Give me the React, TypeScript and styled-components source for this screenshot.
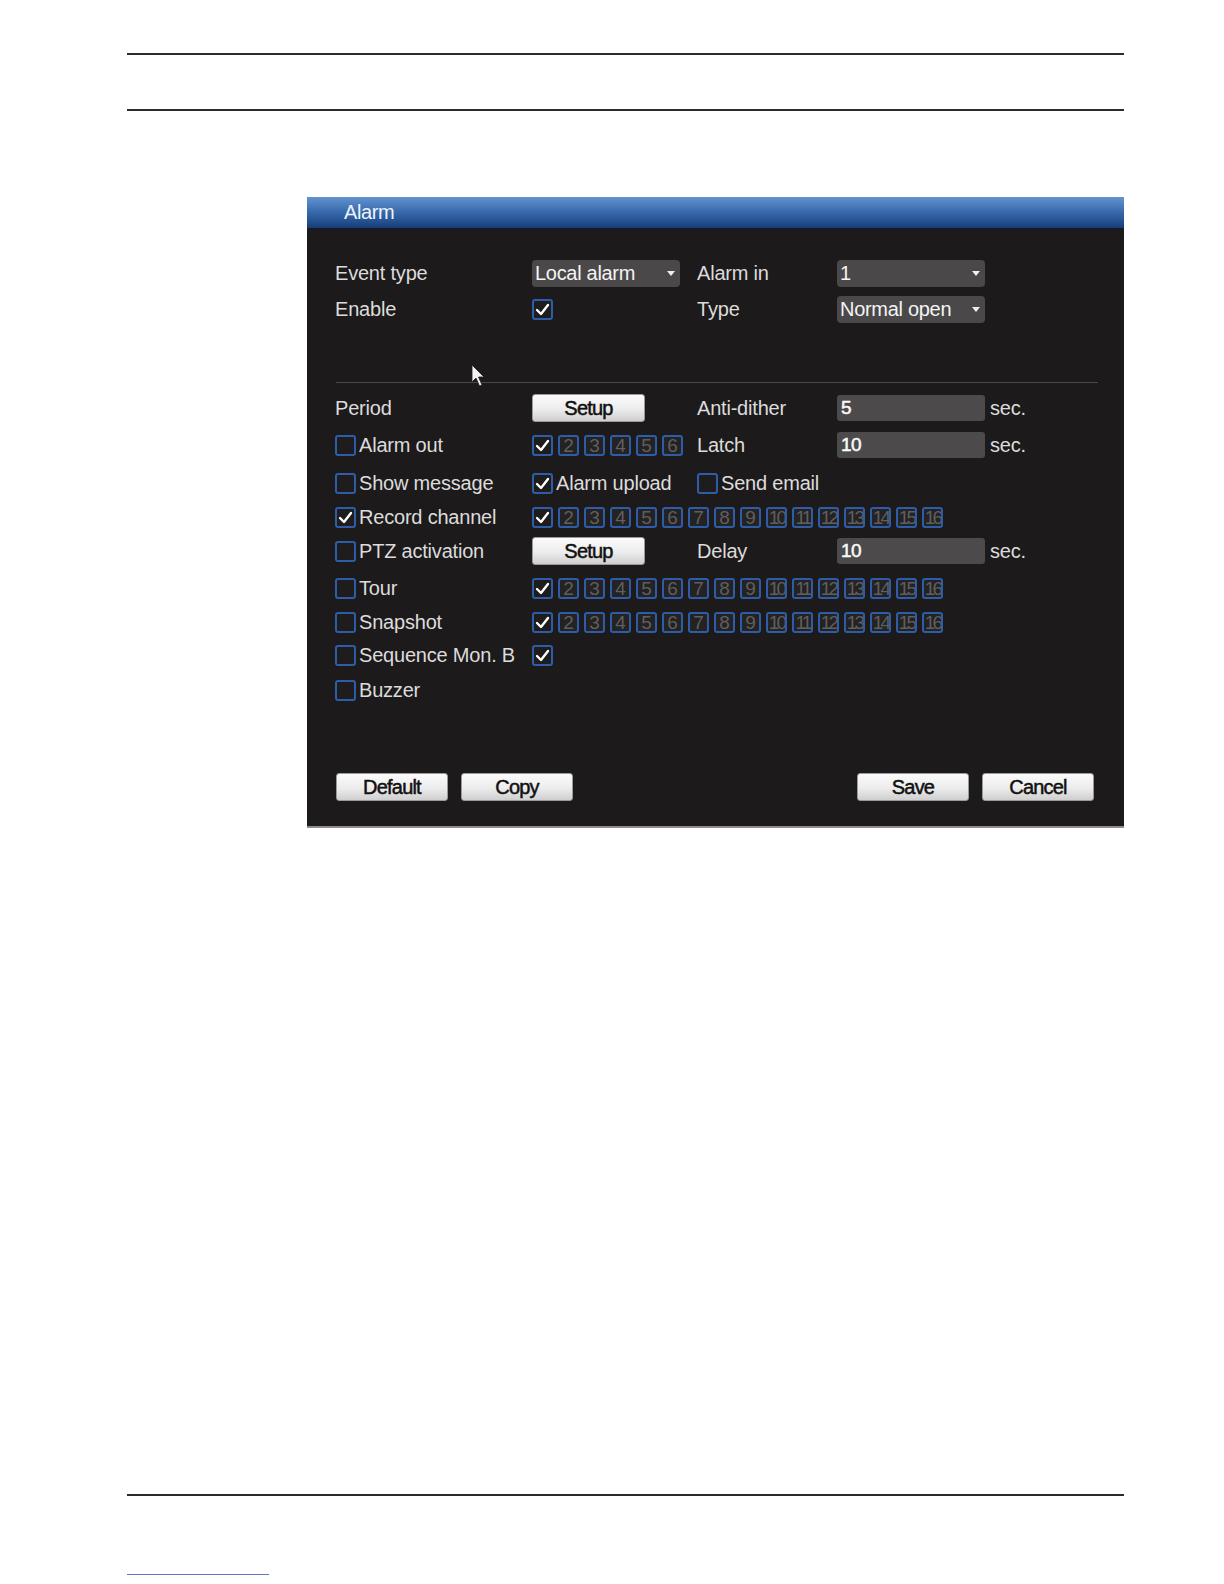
import React from "react";
import styled, { createGlobalStyle } from "styled-components";

const GlobalStyle = createGlobalStyle`
  html, body {
    margin: 0;
    padding: 0;
    background: #fff;
  }
  body {
    font-family: "Liberation Sans", Arial, sans-serif;
  }
`;

const Page = styled.div`
  width: 997px;
  padding: 53px 100px 10px 127px;
`;

const Rule = styled.div<{ $gap: number }>`
  height: 2px;
  background: #2b2b2b;
  margin-top: ${(p) => p.$gap}px;
`;

const FootLink = styled.div`
  width: 142px;
  height: 1px;
  margin-top: 78px;
  background: #5b78c4;
`;

const Window = styled.div`
  width: 817px;
  margin: 86px 0 0 180px;
  background: #1c1a1a;
  border-bottom: 2px solid #8c8c8c;
`;

const TitleBar = styled.div`
  height: 31px;
  padding-left: 37px;
  display: flex;
  align-items: center;
  background: linear-gradient(#6393d0 0%, #3f70b2 40%, #23508f 80%, #183c72 100%);
  border-bottom: 1px solid #0f1e36;
  color: #eef3fb;
  font-size: 20px;
  letter-spacing: -0.4px;
`;

const Body = styled.div`
  position: relative;
  padding: 26px 26px 25px 28px;
`;

const Row = styled.div<{ $h: number }>`
  display: grid;
  grid-template-columns: 197px 165px 140px 148px auto;
  align-items: center;
  height: ${(p) => p.$h}px;
`;

const Label = styled.span`
  color: #dcdcdc;
  font-size: 20px;
  letter-spacing: -0.2px;
  white-space: nowrap;
`;

const Unit = styled(Label)`
  margin-left: 5px;
`;

const Divider = styled.div`
  height: 1px;
  background: #4a4848;
  margin: 55px 0 7px 1px;
`;

const SelectBox = styled.div`
  width: 148px;
  height: 27px;
  box-sizing: border-box;
  padding: 0 5px 0 3px;
  border-radius: 4px;
  background: #4a4848;
  display: flex;
  align-items: center;
  justify-content: space-between;
  color: #f4f4f4;
  font-size: 20px;
  letter-spacing: -0.3px;
`;

const Caret = styled.span`
  width: 0;
  height: 0;
  border-left: 4px solid transparent;
  border-right: 4px solid transparent;
  border-top: 5px solid #f0f0f0;
`;

const Field = styled.div`
  width: 148px;
  height: 26px;
  box-sizing: border-box;
  padding-left: 4px;
  border-radius: 3px;
  background: #4c4a4a;
  display: flex;
  align-items: center;
  color: #fafafa;
  font-size: 19px;
  letter-spacing: -0.6px;
  -webkit-text-stroke: 0.5px #fafafa;
`;

const LightButton = styled.button<{ $w: number; $h: number }>`
  width: ${(p) => p.$w}px;
  height: ${(p) => p.$h}px;
  padding: 0;
  border: 1px solid #9a9a9a;
  border-radius: 3px;
  background: linear-gradient(#fbfbfb 0%, #ececec 55%, #cfcfcf 100%);
  color: #111;
  font-family: "Liberation Sans", Arial, sans-serif;
  font-size: 20px;
  letter-spacing: -0.8px;
  -webkit-text-stroke: 0.5px #111;
  cursor: default;
`;

const Box = styled.span`
  width: 21px;
  height: 21px;
  box-sizing: border-box;
  border: 2px solid #2d5ca8;
  border-radius: 3px;
  background: #1e1c1c;
  display: inline-flex;
  align-items: center;
  justify-content: center;
  flex: none;
`;

const Num = styled(Box)<{ $wide: boolean }>`
  background: #242222;
  color: #5f5f5f;
  font-size: 19px;
  letter-spacing: ${(p) => (p.$wide ? "-2.8px" : "0")};
  line-height: 1;
  overflow: hidden;
`;

const Check = styled.label`
  display: inline-flex;
  align-items: center;
  gap: 3px;
`;

const Strip = styled.div<{ $wide: boolean }>`
  grid-column: ${(p) => (p.$wide ? "2 / 6" : "2 / 3")};
  display: flex;
  gap: 5px;
`;

const Footer = styled.div`
  display: flex;
  justify-content: space-between;
  margin: 66px 4px 0 1px;
`;

const Group = styled.div`
  display: flex;
  gap: 13px;
`;

const Cursor = styled.svg`
  position: absolute;
  left: 164px;
  top: 135px;
`;

function Tick() {
  return (
    <svg width="15" height="13" viewBox="0 0 15 13">
      <path d="M2 7 L6 11 L13 2" fill="none" stroke="#fff" strokeWidth="2.4" strokeLinecap="round" strokeLinejoin="round" />
    </svg>
  );
}

function CheckBox({ on, label }: { on?: boolean; label?: string }) {
  return (
    <Check>
      <Box>{on && <Tick />}</Box>
      {label && <Label>{label}</Label>}
    </Check>
  );
}

function Channels({ count }: { count: number }) {
  return (
    <Strip $wide={count > 6}>
      {Array.from({ length: count }, (_, i) =>
        i === 0 ? (
          <Box key={i}>
            <Tick />
          </Box>
        ) : (
          <Num key={i} $wide={i >= 9}>
            {i + 1}
          </Num>
        )
      )}
    </Strip>
  );
}

function Select({ value }: { value: string }) {
  return (
    <SelectBox>
      <span>{value}</span>
      <Caret />
    </SelectBox>
  );
}

export default function App() {
  return (
    <>
      <GlobalStyle />
      <Page>
        <Rule $gap={0} />
        <Rule $gap={54} />
        <Window>
          <TitleBar>Alarm</TitleBar>
          <Body>
            <Row $h={36}>
              <Label>Event type</Label>
              <Select value="Local alarm" />
              <Label>Alarm in</Label>
              <Select value="1" />
            </Row>
            <Row $h={36}>
              <Label>Enable</Label>
              <CheckBox on />
              <Label>Type</Label>
              <Select value="Normal open" />
            </Row>
            <Divider />
            <Row $h={36}>
              <Label>Period</Label>
              <LightButton $w={113} $h={28}>Setup</LightButton>
              <Label>Anti-dither</Label>
              <Field>5</Field>
              <Unit>sec.</Unit>
            </Row>
            <Row $h={38}>
              <CheckBox label="Alarm out" />
              <Channels count={6} />
              <Label>Latch</Label>
              <Field>10</Field>
              <Unit>sec.</Unit>
            </Row>
            <Row $h={38}>
              <CheckBox label="Show message" />
              <CheckBox on label="Alarm upload" />
              <CheckBox label="Send email" />
            </Row>
            <Row $h={31}>
              <CheckBox on label="Record channel" />
              <Channels count={16} />
            </Row>
            <Row $h={36}>
              <CheckBox label="PTZ activation" />
              <LightButton $w={113} $h={28}>Setup</LightButton>
              <Label>Delay</Label>
              <Field>10</Field>
              <Unit>sec.</Unit>
            </Row>
            <Row $h={38}>
              <CheckBox label="Tour" />
              <Channels count={16} />
            </Row>
            <Row $h={31}>
              <CheckBox label="Snapshot" />
              <Channels count={16} />
            </Row>
            <Row $h={35}>
              <CheckBox label="Sequence Mon. B" />
              <CheckBox on />
            </Row>
            <Row $h={34}>
              <CheckBox label="Buzzer" />
            </Row>
            <Footer>
              <Group>
                <LightButton $w={112} $h={28}>Default</LightButton>
                <LightButton $w={112} $h={28}>Copy</LightButton>
              </Group>
              <Group>
                <LightButton $w={112} $h={28}>Save</LightButton>
                <LightButton $w={112} $h={28}>Cancel</LightButton>
              </Group>
            </Footer>
            <Cursor width="15" height="24" viewBox="0 0 15 24">
              <path d="M1 1 L1 18 L5 14 L8.5 22 L11 21 L7.5 13 L13 13 Z" fill="#f2f2f2" stroke="#222" strokeWidth="0.8" />
            </Cursor>
          </Body>
        </Window>
        <Rule $gap={666} />
        <FootLink />
      </Page>
    </>
  );
}
